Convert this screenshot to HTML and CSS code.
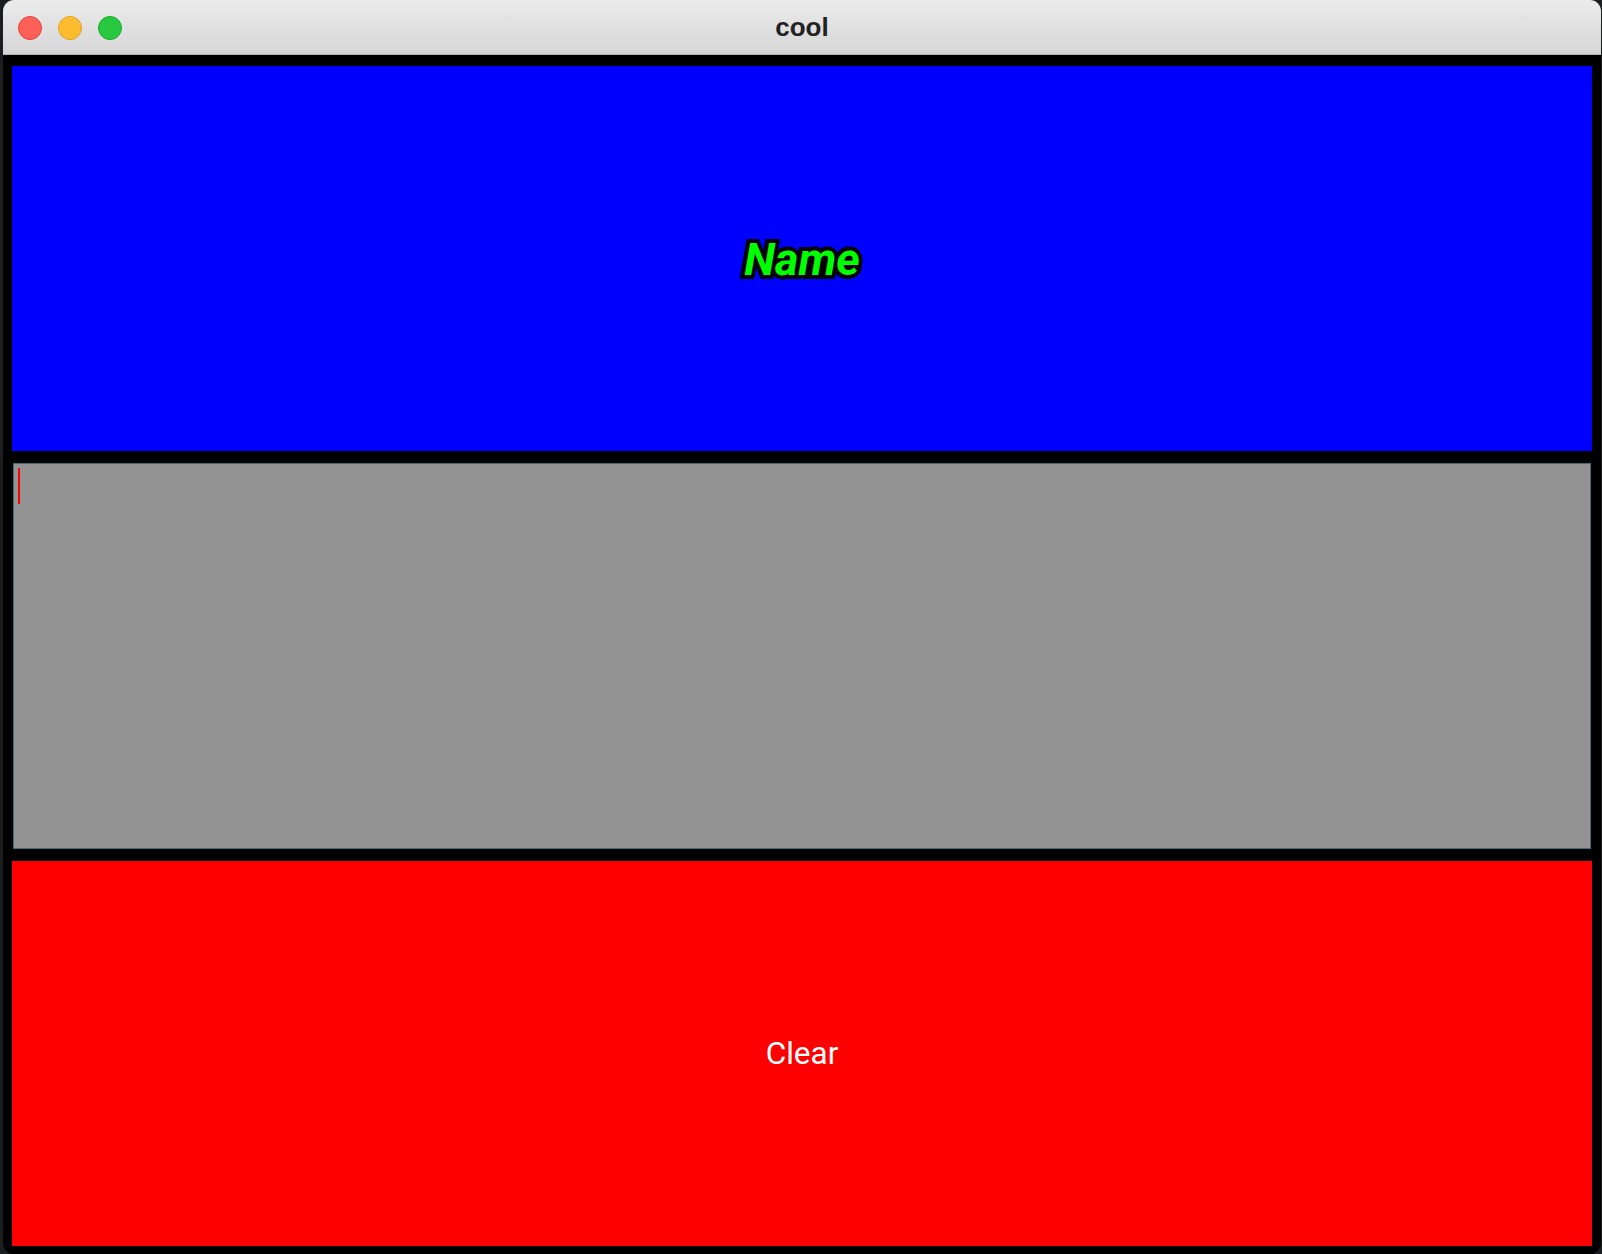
FILE: index.html
```html
<!DOCTYPE html>
<html>
<head>
<meta charset="utf-8">
<title>cool</title>
<link rel="stylesheet" href="styles.css">
</head>
<body>
<div class="window">
  <div class="titlebar">
    <div class="lights">
      <span class="light red"></span>
      <span class="light yellow"></span>
      <span class="light green"></span>
    </div>
    <div class="title">cool</div>
  </div>
  <div class="content">
    <div class="panel name-panel"><span class="name">Name</span></div>
    <div class="panel editor"><span class="caret"></span></div>
    <div class="panel clear-panel"><span class="clear">Clear</span></div>
  </div>
</div>
</body>
</html>
```
FILE: styles.css
```css
html, body {
  margin: 0;
  padding: 0;
}
body {
  background: #1b1d1e;
  width: 1602px;
  height: 1254px;
  overflow: hidden;
}
.window {
  margin-left: 3px;
  width: 1598px;
  height: 1254px;
  border-radius: 11px;
  overflow: hidden;
  background: #000;
  display: flex;
  flex-direction: column;
}
.titlebar {
  height: 54px;
  flex: none;
  background: linear-gradient(#ebebeb, #d6d6d6);
  border-bottom: 1px solid #b2b2b2;
  position: relative;
  display: flex;
  align-items: center;
  justify-content: center;
}
.lights {
  position: absolute;
  left: 15px;
  top: 16px;
  display: flex;
  gap: 16px;
}
.light {
  width: 22px;
  height: 22px;
  border-radius: 50%;
  display: block;
}
.light.red { background: #fe5f57; border: 1px solid #e0443e; }
.light.yellow { background: #febc2e; border: 1px solid #dea123; }
.light.green { background: #28c840; border: 1px solid #1aab29; }
.title {
  font-family: "Liberation Sans", Arial, sans-serif;
  font-weight: bold;
  font-size: 26px;
  color: #222;
  margin-top: 1px;
}
.content {
  flex: 1;
  padding: 11px 9px 8px 9px;
  display: grid;
  grid-template-rows: 1fr 1fr 1fr;
  gap: 12px;
  min-height: 0;
}
.panel {
  display: flex;
  align-items: center;
  justify-content: center;
  min-height: 0;
}
.name-panel {
  background: #0000ff;
}
.name {
  font-family: Roboto, "Liberation Sans", sans-serif;
  font-weight: bold;
  font-style: italic;
  font-size: 45px;
  color: #00ff00;
  -webkit-text-stroke: 8px #000;
  paint-order: stroke fill;
  margin-top: 2px;
}
.editor {
  background: #939393;
  border: 1px solid #3e6d7c;
  margin: 0 1px;
  align-items: flex-start;
  justify-content: flex-start;
  padding: 4px 0 0 4px;
}
.caret {
  display: block;
  width: 2px;
  height: 36px;
  background: #ff0000;
}
.clear-panel {
  background: #ff0000;
}
.clear {
  font-family: Roboto, "Liberation Sans", sans-serif;
  font-size: 31.5px;
  color: #fff;
}
```
